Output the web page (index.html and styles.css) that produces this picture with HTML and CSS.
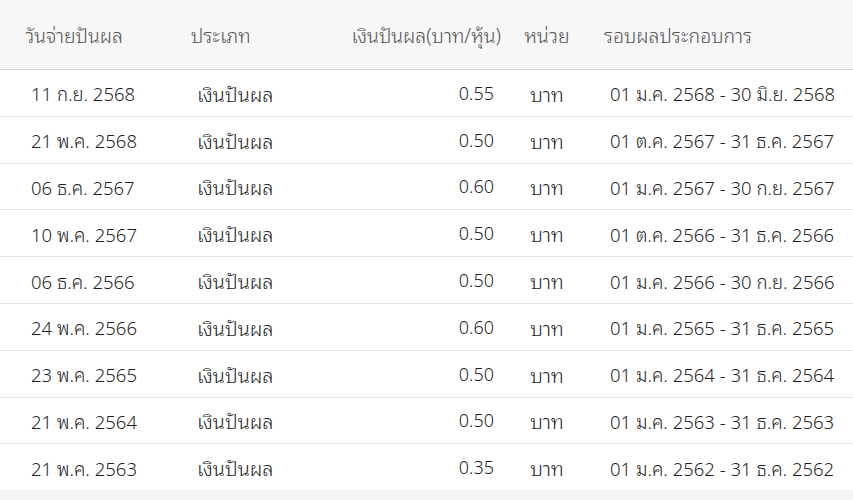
FILE: index.html
```html
<!DOCTYPE html>
<html lang="th">
<head>
<meta charset="utf-8">
<title>ประวัติการจ่ายเงินปันผล</title>
<link rel="stylesheet" href="styles.css">
</head>
<body>
<div class="card">
  <table class="dividends">
    <colgroup>
      <col class="w1"><col class="w2"><col class="w3"><col class="w4"><col class="w5">
    </colgroup>
    <thead>
      <tr>
        <th class="c1">วันจ่ายปันผล</th>
        <th class="c2">ประเภท</th>
        <th class="c3">เงินปันผล(บาท/หุ้น)</th>
        <th class="c4">หน่วย</th>
        <th class="c5">รอบผลประกอบการ</th>
      </tr>
    </thead>
    <tbody>
      <tr><td class="c1">11 ก.ย. 2568</td><td class="c2">เงินปันผล</td><td class="c3">0.55</td><td class="c4">บาท</td><td class="c5">01 ม.ค. 2568 - 30 มิ.ย. 2568</td></tr>
      <tr><td class="c1">21 พ.ค. 2568</td><td class="c2">เงินปันผล</td><td class="c3">0.50</td><td class="c4">บาท</td><td class="c5">01 ต.ค. 2567 - 31 ธ.ค. 2567</td></tr>
      <tr><td class="c1">06 ธ.ค. 2567</td><td class="c2">เงินปันผล</td><td class="c3">0.60</td><td class="c4">บาท</td><td class="c5">01 ม.ค. 2567 - 30 ก.ย. 2567</td></tr>
      <tr><td class="c1">10 พ.ค. 2567</td><td class="c2">เงินปันผล</td><td class="c3">0.50</td><td class="c4">บาท</td><td class="c5">01 ต.ค. 2566 - 31 ธ.ค. 2566</td></tr>
      <tr><td class="c1">06 ธ.ค. 2566</td><td class="c2">เงินปันผล</td><td class="c3">0.50</td><td class="c4">บาท</td><td class="c5">01 ม.ค. 2566 - 30 ก.ย. 2566</td></tr>
      <tr><td class="c1">24 พ.ค. 2566</td><td class="c2">เงินปันผล</td><td class="c3">0.60</td><td class="c4">บาท</td><td class="c5">01 ม.ค. 2565 - 31 ธ.ค. 2565</td></tr>
      <tr><td class="c1">23 พ.ค. 2565</td><td class="c2">เงินปันผล</td><td class="c3">0.50</td><td class="c4">บาท</td><td class="c5">01 ม.ค. 2564 - 31 ธ.ค. 2564</td></tr>
      <tr><td class="c1">21 พ.ค. 2564</td><td class="c2">เงินปันผล</td><td class="c3">0.50</td><td class="c4">บาท</td><td class="c5">01 ม.ค. 2563 - 31 ธ.ค. 2563</td></tr>
      <tr><td class="c1">21 พ.ค. 2563</td><td class="c2">เงินปันผล</td><td class="c3">0.35</td><td class="c4">บาท</td><td class="c5">01 ม.ค. 2562 - 31 ธ.ค. 2562</td></tr>
    </tbody>
  </table>
</div>
</body>
</html>
```

FILE: styles.css
```css
html, body {
  margin: 0;
  padding: 0;
  background: #f4f4f6;
}
body {
  font-family: "Noto Sans", "Noto Sans Thai Looped", "Noto Sans Thai", sans-serif;
  font-size: 18px;
  font-weight: 350;
  color: #1f1f1f;
}
.card {
  background: #fff;
  width: 853px;
  box-shadow: 0 3px 6px rgba(0, 0, 0, 0.08);
}
.dividends {
  width: 853px;
  border-collapse: collapse;
  table-layout: fixed;
}
.w1 { width: 178px; }
.w2 { width: 140px; }
.w3 { width: 193px; }
.w4 { width: 72px; }
.w5 { width: 270px; }

.dividends th {
  height: 69px;
  padding: 0;
  background: #f7f7f8;
  color: #555;
  font-size: 19.5px;
  font-weight: 350;
  text-align: left;
  border-bottom: 1px solid #d6d6e0;
  white-space: nowrap;
}
.dividends td {
  height: 45.8px;
  padding: 0;
  border-bottom: 1px solid #e6e6e6;
  white-space: nowrap;
}
.dividends tbody tr:last-child td { border-bottom: none; }

th.c1 { padding-left: 25px; }
td.c1 { padding-left: 31px; font-size: 18.5px; }
th.c2 { padding-left: 13px; }
td.c2 { padding-left: 19px; font-size: 20px; }
th.c3 { text-align: right; padding-right: 10px; }
td.c3 { text-align: right; padding-right: 17px; }
th.c4, td.c4 { text-align: center; }
td.c4 { font-size: 20px; }
th.c5 { padding-left: 21px; }
td.c5 { padding-left: 27px; font-size: 18.5px; }
```
